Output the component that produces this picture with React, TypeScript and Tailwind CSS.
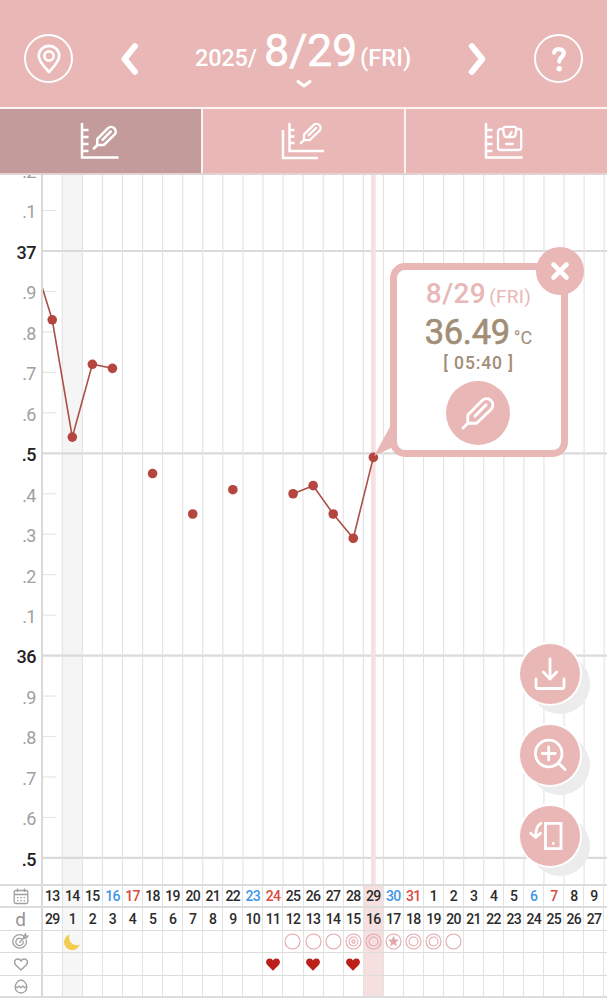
import React, { useState } from "react";

const COL = 20.07;
const ORIGIN = 42.2;
const CHART_TOP = 175;

const colX = (i: number) => ORIGIN + (i + 0.5) * COL;
const tempY = (t: number) => 251 + (37 - t) * 404.6 - CHART_TOP;

const DATES = [13, 14, 15, 16, 17, 18, 19, 20, 21, 22, 23, 24, 25, 26, 27, 28, 29, 30, 31, 1, 2, 3, 4, 5, 6, 7, 8, 9];
const SATURDAYS = [3, 10, 17, 24];
const SUNDAYS = [4, 11, 18, 25];
const CYCLE_START = 1;
const SELECTED = 16;
const HEARTS = [11, 13, 15];

type Mark = "single" | "double" | "triple" | "star";
const MARKS: Record<number, Mark> = {
  12: "single",
  13: "single",
  14: "single",
  15: "triple",
  16: "double",
  17: "star",
  18: "double",
  19: "double",
  20: "single",
};

const SCALE = [".2", ".1", "37", ".9", ".8", ".7", ".6", ".5", ".4", ".3", ".2", ".1", "36", ".9", ".8", ".7", ".6", ".5"];
const MAJOR = [2, 7, 12, 17];

// Consecutive readings are joined, gaps start a new segment
const SEGMENTS: [number, number][][] = [
  [[-1, 36.99], [0, 36.83], [1, 36.54], [2, 36.72], [3, 36.71]],
  [[5, 36.45]],
  [[7, 36.35]],
  [[9, 36.41]],
  [[12, 36.4], [13, 36.42], [14, 36.35], [15, 36.29], [16, 36.49]],
];

function ThermometerShape() {
  return (
    <>
      <path d="M1.5 23.5 5 20" />
      <path d="M5 20v-6L15.7 3.2a4.6 4.6 0 0 1 6.5 6.5L11.5 20H5Z" />
      <path d="M10.2 14.8l8.3-8.3" />
    </>
  );
}

function Thermometer({ className }: { className?: string }) {
  return (
    <svg viewBox="0 0 25 25" className={className} fill="none" stroke="currentColor" strokeWidth="2.1" strokeLinecap="round" strokeLinejoin="round">
      <ThermometerShape />
    </svg>
  );
}

function TabIcon({ kind }: { kind: "temp" | "compare" | "weight" }) {
  return (
    <svg viewBox="0 0 44 40" className="h-10 w-11" fill="none" stroke="currentColor" strokeWidth="2.5">
      {kind === "compare" ? (
        <>
          <path d="M2 9v28h35" />
          <path d="M8.500 2v28H43M8.500 9h5M8.500 15.500h5M8.500 22h5" />
          <g transform="translate(18.500 1) scale(.9)" strokeLinecap="round" strokeLinejoin="round"><ThermometerShape /></g>
        </>
      ) : (
        <path d="M5 2v34.500h36.500M5 9h6.500M5 16h6.500M5 23h6.500M5 30h6.500" />
      )}
      {kind === "temp" && <g transform="translate(15.300 4)" strokeLinecap="round" strokeLinejoin="round"><ThermometerShape /></g>}
      {kind === "weight" && (
        <g transform="translate(.5 1)" strokeLinejoin="round" strokeLinecap="round" strokeWidth="2.300">
          <path d="M20.500 7H19a2.500 2.500 0 0 0-2.500 2.500v16a2.500 2.500 0 0 0 2.500 2.500h18.200a2.500 2.500 0 0 0 2.500-2.500V9.500a2.500 2.500 0 0 0-2.500-2.500H35.500" />
          <path d="M24 4.800h8.500c2 0 2.500 1.500 2.300 3l-.8 4.700c-.3 1.700-1.200 2.500-2.700 2.500h-6.100c-1.500 0-2.400-.8-2.700-2.500l-.8-4.700c-.2-1.500.3-3 2.300-3ZM27.500 14.500l2.500-4.500M24.500 22h7" />
        </g>
      )}
    </svg>
  );
}

function Chevron({ left }: { left?: boolean }) {
  return (
    <svg viewBox="0 0 20 34" className="h-[34px] w-5" fill="none" stroke="white" strokeWidth="6" strokeLinecap="round" strokeLinejoin="round">
      <path d={left ? "M16 4.200 5.500 17 16 29.800" : "M4.800 4.200 15.300 17 4.800 29.800"} />
    </svg>
  );
}

function Header() {
  return (
    <header className="flex h-[107px] items-start justify-between px-6 pt-[34px] text-white">
      <button className="flex size-[49px] items-center justify-center rounded-full border-2 border-white">
        <svg viewBox="0 0 24 30" className="h-[30px] w-6" fill="none" stroke="currentColor" strokeWidth="2.7" strokeLinejoin="round">
          <path d="M12 28C9 24.500 1.800 18 1.800 12a10.200 10.200 0 0 1 20.400 0c0 6-7.200 12.500-10.200 16Z" />
          <circle cx="12" cy="12" r="4.600" />
        </svg>
      </button>
      <button className="mt-2 ml-[46px]"><Chevron left /></button>
      <div className="relative ml-[56px] flex flex-1 items-baseline font-medium whitespace-nowrap">
        <span className="w-[69px] text-[23.500px] leading-none tracking-[-0.2px]">2025/</span>
        <span className="w-[96px] text-[45px] leading-[34px] font-normal tracking-[-0.4px] [-webkit-text-stroke:0.5px_white]">8/29</span>
        <span className="text-[23.500px] leading-none tracking-[0.1px]">(FRI)</span>
        <svg viewBox="0 0 18 10" className="absolute top-[44.500px] left-[99.500px] h-[10px] w-[18px]" fill="none" stroke="white" strokeWidth="3" strokeLinecap="round" strokeLinejoin="round">
          <path d="M3 2.500 9 7l6-4.500" />
        </svg>
      </div>
      <button className="mt-2 mr-[47px]"><Chevron /></button>
      <button className="flex size-[49px] items-center justify-center rounded-full border-2 border-white">
        <svg viewBox="0 0 16 26" className="h-[26px] w-4" fill="none" stroke="currentColor" strokeWidth="4.300" strokeLinecap="round" strokeLinejoin="round">
          <path d="M3.200 6.500C3.400 2 12.800 1.900 12.800 7.200c0 4-4.600 3.800-4.600 8.300" />
          <circle cx="8.200" cy="22.700" r="2.700" fill="currentColor" stroke="none" />
        </svg>
      </button>
    </header>
  );
}

function Chart() {
  return (
    <section className="flex h-[709px] overflow-hidden">
      <div className="flex w-[43px] shrink-0 flex-col border-r-2 border-[#d9d9d9]">
        {SCALE.map((label, i) => (
          <div
            key={i}
            className={`flex h-[40.460px] shrink-0 items-center justify-end pr-[5px] text-[18px] tracking-[-0.5px] first:-mt-[23.700px] ${
              MAJOR.includes(i) ? "font-medium text-[#222]" : "text-[#a0a0a0]"
            }`}
          >
            {label}
          </div>
        ))}
      </div>
      <svg viewBox="43 0 564 709" className="h-[709px] w-[564px] shrink-0">
        <rect x={colX(CYCLE_START) - COL / 2} y="0" width={COL} height="709" fill="#f5f5f5" />
        {SCALE.map((_, i) => (
          <line
            key={i}
            x1="43"
            x2={MAJOR.includes(i) ? 607 : 55.500}
            y1={tempY(37.2 - i / 10)}
            y2={tempY(37.2 - i / 10)}
            stroke={MAJOR.includes(i) ? "#dadada" : "#e4e4e4"}
            strokeWidth={MAJOR.includes(i) ? 2.2 : 1.2}
          />
        ))}
        {DATES.map((_, i) => (
          <line key={i} x1={colX(i) + COL / 2} x2={colX(i) + COL / 2} y1="0" y2="709" stroke="#e2e2e2" strokeWidth="1.1" />
        ))}
        <rect x="371" y="0" width="4.700" height="709" fill="#f5e1e1" />
        {SEGMENTS.map((seg, i) => (
          <g key={i} fill="#b5453f">
            <polyline points={seg.map(([d, t]) => `${colX(d)},${tempY(t)}`).join(" ")} fill="none" stroke="#ad4f49" strokeWidth="1.600" />
            {seg.filter(([d]) => d >= 0).map(([d, t]) => (
              <circle key={d} cx={colX(d)} cy={tempY(t)} r="4.800" />
            ))}
          </g>
        ))}
        <path d="M374 281 391 250v23Z" fill="#e8b7b6" />
      </svg>
    </section>
  );
}

function MarkIcon({ mark }: { mark: Mark }) {
  return (
    <svg viewBox="0 0 17 17" className="size-[17px] shrink-0" fill="none" stroke="#e3a9aa" strokeWidth="1.100">
      <circle cx="8.500" cy="8.500" r="7.500" />
      {(mark === "double" || mark === "triple") && <circle cx="8.500" cy="8.500" r="4.500" />}
      {mark === "triple" && <circle cx="8.500" cy="8.500" r="1.600" />}
      {mark === "star" && (
        <path d="m8.500 4.200 1.200 2.700 2.900.3-2.200 2 .6 2.900-2.500-1.500L6 12.100l.6-2.900-2.200-2 2.900-.3Z" fill="#e3a9aa" />
      )}
    </svg>
  );
}

function Row({ className, icon, cell }: { className: string; icon: React.ReactNode; cell: (i: number) => React.ReactNode }) {
  return (
    <div className={`flex border-[#dcdcdc] ${className}`}>
      <div className="flex w-[43px] shrink-0 items-center justify-center border-r-2 border-[#d9d9d9] text-[#a0a0a0]">{icon}</div>
      <div className="-ml-[0.300px] flex shrink-0">
        {DATES.map((_, i) => (
          <div
            key={i}
            className={`flex w-[20.070px] shrink-0 items-center justify-center border-r border-[#e2e2e2] ${
              i === CYCLE_START ? "bg-[#f5f5f5]/80" : i === SELECTED ? "bg-[#f6dfdf]" : ""
            }`}
          >
            {cell(i)}
          </div>
        ))}
      </div>
    </div>
  );
}

function DayTable() {
  const numClass = "text-[14px] leading-none font-medium tracking-[-0.7px]";
  return (
    <section className="border-b-2 border-[#dcdcdc]">
      <Row
        className="h-[22px] border-t-2"
        icon={
          <svg viewBox="0 0 16 17" className="h-[17px] w-4" fill="none" stroke="currentColor" strokeWidth="1.300">
            <rect x="1.200" y="2.500" width="13.600" height="13" rx="1.500" />
            <path d="M1.200 6.500h13.600M4.500.500v3.500M11.500.500v3.500" />
            <path d="M4 9.700h8.500M4 12.700h8.500" strokeDasharray="1.500 1.800" />
          </svg>
        }
        cell={(i) => (
          <span className={`${numClass} ${SATURDAYS.includes(i) ? "text-[#3f96e8]" : SUNDAYS.includes(i) ? "text-[#dc4a40]" : "text-[#2b2b2b]"}`}>
            {DATES[i]}
          </span>
        )}
      />
      <Row
        className="h-6 border-t-2"
        icon={<span className="text-[19px] leading-none text-[#949494]">d</span>}
        cell={(i) => <span className={`${numClass} text-[#2b2b2b]`}>{i === 0 ? 29 : i}</span>}
      />
      <Row
        className="h-[22px] border-t"
        icon={
          <svg viewBox="0 0 17 17" className="size-[17px]" fill="none" stroke="currentColor" strokeWidth="1.300" strokeLinecap="round">
            <path d="M10.800 2.400A6.800 6.800 0 1 0 14.300 7.200" />
            <path d="M9.400 5.700A3.700 3.700 0 1 0 11.200 8.300M7.700 9.200l5.500-5.500M11.500 5.200V3.200L13.600 1v2.200h2.400l-2.200 2.200h-2" />
          </svg>
        }
        cell={(i) =>
          i === CYCLE_START ? (
            <svg viewBox="0 0 16 16" className="size-4 shrink-0" fill="#f3cc50">
              <path d="M5.600.500A8 8 0 1 0 15.700 10.600C10.200 13 3.200 8 5.600.500Z" />
            </svg>
          ) : MARKS[i] ? (
            <MarkIcon mark={MARKS[i]} />
          ) : null
        }
      />
      <Row
        className="h-[23px] border-t"
        icon={
          <svg viewBox="0 0 14 13" className="h-[13px] w-[14px]" fill="none" stroke="currentColor" strokeWidth="1.400" strokeLinejoin="round">
            <path d="M7 12 1.800 7C-.700 4 1 1 3.700 1 5.300 1 6.400 1.800 7 3 7.600 1.800 8.700 1 10.300 1 13 1 14.700 4 12.200 7Z" />
          </svg>
        }
        cell={(i) =>
          HEARTS.includes(i) && (
            <svg viewBox="0 0 14 13" className="h-[13px] w-[14px] shrink-0" fill="#bb211a">
              <path d="M7 12.800 1 6.800C-1.200 3.800.600.400 3.700.400 5.300.400 6.400 1.200 7 2.400 7.600 1.200 8.700.400 10.300.400 13.400.400 15.200 3.800 13 6.800Z" />
            </svg>
          )
        }
      />
      <Row
        className="h-[21px] border-t"
        icon={
          <svg viewBox="0 0 14 15" className="mt-px h-[15px] w-[14px]" fill="none" stroke="currentColor" strokeWidth="1.300">
            <path d="M7 1c3 0 5.800 3.800 5.800 7.200S10.200 14 7 14s-5.800-2.400-5.800-5.800S4 1 7 1Z" />
            <path d="m1.300 7.200 1.900 1.500 1.900-1.500L7 8.700l1.900-1.500 1.900 1.500 1.900-1.500" />
          </svg>
        }
        cell={() => null}
      />
    </section>
  );
}

function ReadingPopup({ onClose }: { onClose: () => void }) {
  return (
    <div className="absolute top-[263px] left-[389.500px] flex h-[194px] w-[178px] flex-col items-center rounded-[15px] border-[7.500px] border-[#e8b7b6] bg-white/95">
      <p className="mt-[11px] flex items-baseline leading-[26px] text-[#e8b7b6]">
        <span className="mr-[3px] text-[28px] font-medium tracking-[0.4px]">8/29</span>
        <span className="text-[19px] tracking-[0.3px]">(FRI)</span>
      </p>
      <p className="mt-[5px] flex items-baseline leading-[34px] text-[#a28d76]">
        <span className="mr-1 text-[34.500px] tracking-[-0.3px] [-webkit-text-stroke:0.6px_#a28d76]">36.49</span>
        <span className="text-[18px]">°C</span>
      </p>
      <p className="-mt-px text-[17.500px] leading-[18px] font-medium tracking-[0.9px] text-[#a28d76]">[ 05:40 ]</p>
      <button className="mt-[9px] mr-px flex size-16 shrink-0 items-center justify-center rounded-full bg-[#e8b7b6] text-white">
        <Thermometer className="size-[34px]" />
      </button>
      <button onClick={onClose} className="absolute -top-[23px] -right-[23px] flex size-12 items-center justify-center rounded-full bg-[#e8b7b6]">
        <svg viewBox="0 0 20 20" className="size-5" stroke="white" strokeWidth="4.600" strokeLinecap="round">
          <path d="m3.500 3.500 13 13M16.500 3.500l-13 13" />
        </svg>
      </button>
    </div>
  );
}

function Fab({ children }: { children: React.ReactNode }) {
  return (
    <button className="flex size-[62px] items-center justify-center rounded-full border border-white bg-[#e8b7b6] shadow-[0_0_0_1px_white,10px_10px_0_-1px_#ececed]">
      <svg viewBox="0 0 36 36" className="size-9 overflow-visible" fill="none" stroke="white" strokeWidth="2.800" strokeLinecap="round" strokeLinejoin="round">
        {children}
      </svg>
    </button>
  );
}

export default function App() {
  const [popupOpen, setPopupOpen] = useState(true);

  return (
    <div className="relative h-[1000px] w-[607px] overflow-hidden bg-white" style={{ fontFamily: 'Roboto, "Liberation Sans", sans-serif' }}>
      <div className="bg-[#e8b7b6]">
        <Header />
        <nav className="grid h-[68px] grid-cols-3 border-y-2 border-t-[#fcf3f2] border-b-[#e2d3d3] text-white">
          <button className="flex items-center justify-center border-r border-[#fcf3f2] bg-[#c39b9b] pr-1"><TabIcon kind="temp" /></button>
          <button className="flex items-center justify-center border-x border-[#fcf3f2]"><TabIcon kind="compare" /></button>
          <button className="flex items-center justify-center border-l border-[#fcf3f2] pr-[7px]"><TabIcon kind="weight" /></button>
        </nav>
      </div>

      <Chart />
      <DayTable />

      {popupOpen && <ReadingPopup onClose={() => setPopupOpen(false)} />}

      {/* Floating actions */}
      <div className="absolute top-[643px] left-[519px] flex flex-col gap-[19px]">
        <Fab>
          <path d="M18 3v20M11.300 16l6.700 7 6.700-7M4 23v7.500q0 2 2 2h24q2 0 2-2V23" />
        </Fab>
        <Fab>
          <circle cx="16.700" cy="16.500" r="13.300" />
          <path d="M10.200 16.500h13M16.700 10v13M26.500 26l6.500 6.500" />
        </Fab>
        <Fab>
          <path d="M13.500 5.300h15.500v25.400H13.500Z" strokeLinejoin="miter" />
          <path d="M9 5.200C5 7 3.700 10.500 3.700 18.500M-1.300 15.200 3.700 19.500 8.500 15.200" />
          <circle cx="21.300" cy="25.500" r="1.400" fill="white" stroke="none" />
        </Fab>
      </div>
    </div>
  );
}
